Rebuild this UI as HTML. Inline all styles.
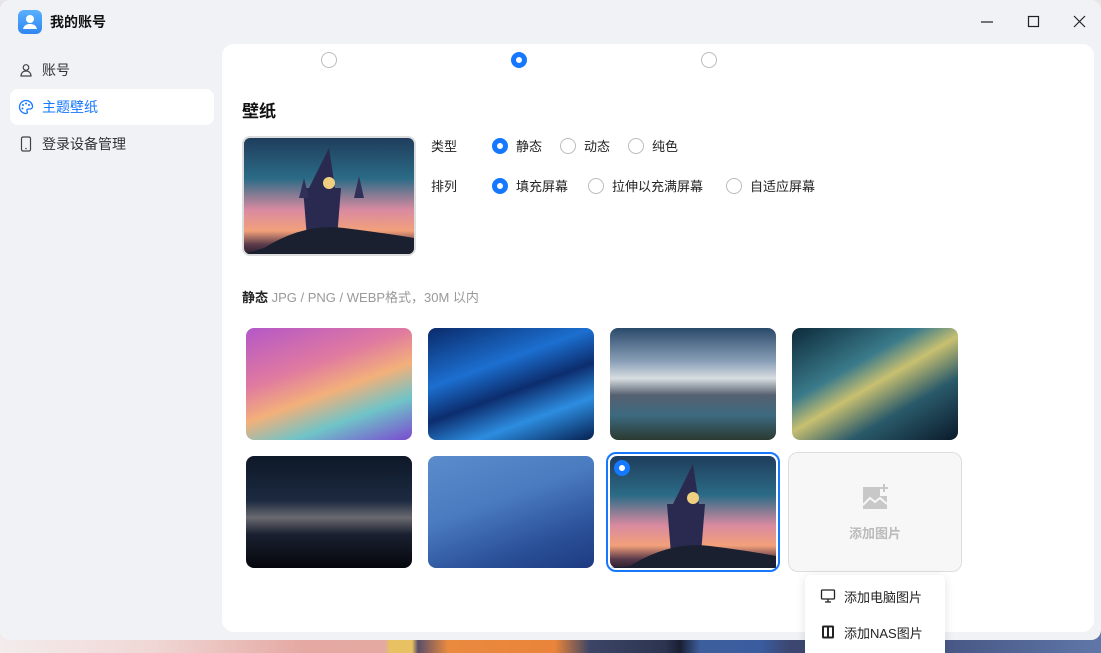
<!DOCTYPE html>
<html><head><meta charset="utf-8"><style>
*{margin:0;padding:0;box-sizing:border-box}
html{width:1101px;height:653px;overflow:hidden}
body{width:1101px;height:653px;overflow:hidden;position:relative;font-family:"Liberation Sans","Noto Sans CJK SC",sans-serif;background:#e9e4e6}
.desk{position:absolute;left:0;top:630px;width:1101px;height:23px;background:linear-gradient(90deg,#f3ecec 0,#f0d8d6 150px,#e5a9a3 300px,#e4a9a0 385px,#e8c262 390px,#e8c262 412px,#5a4e6a 418px,#e98a3f 448px,#e9843a 555px,#3c4566 590px,#2c3450 665px,#1a1f33 680px,#3d5e9c 700px,#3a5da0 760px,#3c4670 790px,#4a5a88 960px,#5f77a8 1101px)}
.win{position:absolute;left:0;top:0;width:1101px;height:640px;background:#f0f2f5;border-radius:10px}
.title{position:absolute;left:50px;top:12px;font-size:14px;font-weight:bold;color:#111}
.logo{position:absolute;left:18px;top:10px;width:24px;height:24px;border-radius:6px;background:linear-gradient(#5ab0ff,#2f86f0)}
.nav{position:absolute;left:10px;width:204px;height:36px;border-radius:8px;font-size:14px;color:#333;line-height:36px;padding-left:32px}
.nav svg{position:absolute;left:9px;top:11px}
.card{position:absolute;left:222px;top:44px;width:872px;height:588px;background:#fff;border-radius:12px;overflow:hidden}
.r{position:absolute;width:16px;height:16px;border-radius:50%;border:1px solid #bbb;background:#fff}
.r.on{border:5px solid #1677ff}
.lbl{position:absolute;font-size:13px;color:#222}
.th{position:absolute;width:166px;height:112px;border-radius:8px;overflow:hidden}
</style></head><body>
<div class="desk"></div>
<div class="win">
<div class="logo"><svg width="24" height="24"><circle cx="12" cy="9" r="4" fill="#fff"/><path d="M5 19c1-4 4-5 7-5s6 1 7 5z" fill="#fff"/></svg></div>
<div class="title">我的账号</div>
<svg style="position:absolute;left:980px;top:15px" width="14" height="14"><path d="M1 7h12" stroke="#222" stroke-width="1.2"/></svg>
<svg style="position:absolute;left:1027px;top:15px" width="14" height="14"><rect x="1.5" y="1.5" width="10" height="10" fill="none" stroke="#222" stroke-width="1.2"/></svg>
<svg style="position:absolute;left:1073px;top:15px" width="14" height="14"><path d="M1 1l11 11M12 1L1 12" stroke="#222" stroke-width="1.2"/></svg>
<div class="nav" style="top:52px"><svg width="14" height="14"><circle cx="7" cy="4.5" r="2.8" fill="none" stroke="#444" stroke-width="1.2"/><path d="M2 13c0-3 2-5 5-5s5 2 5 5z" fill="none" stroke="#444" stroke-width="1.2"/></svg>账号</div>
<div class="nav" style="top:89px;background:#fff;color:#1677ff"><svg width="16" height="16" style="top:10px;left:8px"><path d="M8 1.5a6.5 6.5 0 1 0 0 13c1.5 0 1.5-1.5 1-2.5s0-2 1.5-2h2A2.5 2.5 0 0 0 14.5 7 6.5 6.5 0 0 0 8 1.5z" fill="none" stroke="#1677ff" stroke-width="1.3"/><circle cx="5" cy="6" r="1" fill="#1677ff"/><circle cx="8" cy="4.5" r="1" fill="#1677ff"/><circle cx="11" cy="6" r="1" fill="#1677ff"/><circle cx="4.5" cy="9.5" r="1" fill="#1677ff"/></svg>主题壁纸</div>
<div class="nav" style="top:126px"><svg width="14" height="16" style="top:10px"><rect x="2.5" y="1" width="9" height="14" rx="1.5" fill="none" stroke="#444" stroke-width="1.2"/><circle cx="7" cy="12.5" r=".8" fill="#444"/></svg>登录设备管理</div>
</div>
<div class="card">
<div class="r" style="left:99px;top:8px"></div>
<div class="r on" style="left:289px;top:8px"></div>
<div class="r" style="left:479px;top:8px"></div>
<div style="position:absolute;left:20px;top:53px;font-size:17px;font-weight:bold;color:#111">壁纸</div>
<div class="th" style="left:20px;top:92px;width:174px;height:120px;border:2px solid #ddd;background:linear-gradient(180deg,#1f3d5c 0,#2b6b86 35%,#d98aa0 62%,#f2a07a 80%,#5a3a4a 92%,#2a2030 100%)"><svg width="170" height="116"><path d="M85 10l6 40h6l-4 50h-30l-4-50h6z" fill="#2a2a50"/><circle cx="85" cy="45" r="6" fill="#f0d080"/><path d="M55 60l5-20 5 20zM110 60l5-22 5 22z" fill="#303058"/><path d="M20 110q40-25 80-20t70 10v16H0z" fill="#1a2030"/></svg></div>
<div class="lbl" style="left:209px;top:92px">类型</div>
<div class="r on" style="left:270px;top:94px"></div><div class="lbl" style="left:294px;top:92px">静态</div>
<div class="r" style="left:338px;top:94px"></div><div class="lbl" style="left:362px;top:92px">动态</div>
<div class="r" style="left:406px;top:94px"></div><div class="lbl" style="left:430px;top:92px">纯色</div>
<div class="lbl" style="left:209px;top:132px">排列</div>
<div class="r on" style="left:270px;top:134px"></div><div class="lbl" style="left:294px;top:132px">填充屏幕</div>
<div class="r" style="left:366px;top:134px"></div><div class="lbl" style="left:390px;top:132px">拉伸以充满屏幕</div>
<div class="r" style="left:504px;top:134px"></div><div class="lbl" style="left:528px;top:132px">自适应屏幕</div>
<div style="position:absolute;left:20px;top:243px;font-size:13px;color:#999"><b style="color:#222">静态</b> JPG / PNG / WEBP格式，30M 以内</div>
<div class="th" style="left:24px;top:284px;background:linear-gradient(160deg,#b457c8 0,#e07aa0 35%,#f3b07a 55%,#6fc4c8 75%,#7a4ad0 100%)"></div>
<div class="th" style="left:206px;top:284px;background:linear-gradient(160deg,#0a2a6a 0,#1c6fd0 35%,#0c2d6e 55%,#2d8de0 75%,#062050 100%)"></div>
<div class="th" style="left:388px;top:284px;background:linear-gradient(180deg,#2a4a6a 0,#8aa0b8 30%,#d8dde0 45%,#556070 60%,#3d6a80 78%,#2a3a30 100%)"></div>
<div class="th" style="left:570px;top:284px;background:linear-gradient(150deg,#0c2a3a 0,#3a7a8a 35%,#c8c070 50%,#2a5a6a 70%,#0a1a2a 100%)"></div>
<div class="th" style="left:24px;top:412px;background:linear-gradient(180deg,#0e1828 0,#1c2a40 40%,#6a6a70 55%,#1a2030 70%,#05070c 100%)"></div>
<div class="th" style="left:206px;top:412px;background:linear-gradient(160deg,#5b8ccc 0,#4a7bc0 40%,#2a5098 75%,#1e3a80 100%)"></div>
<div class="th" style="left:384px;top:408px;width:174px;height:120px;border:2px solid #1677ff;border-radius:10px;padding:2px;background:#fff"><div style="width:166px;height:112px;border-radius:7px;background:linear-gradient(180deg,#1f3d5c 0,#2b6b86 35%,#d98aa0 62%,#f2a07a 80%,#5a3a4a 92%,#2a2030 100%);position:relative"><svg width="166" height="112" style="position:absolute;left:0;top:0"><path d="M83 8l6 40h6l-4 50h-30l-4-50h6z" fill="#2a2a50"/><circle cx="83" cy="42" r="6" fill="#f0d080"/><path d="M20 110q40-25 80-20t66 10v12H0z" fill="#1a2030"/></svg><div style="position:absolute;left:4px;top:4px;width:16px;height:16px;border-radius:50%;border:5px solid #1677ff;background:#fff"></div></div></div>
<div class="th" style="left:566px;top:408px;width:174px;height:120px;border:1px solid #ddd;border-radius:10px;background:#f7f7f7"><svg width="30" height="30" style="position:absolute;left:71px;top:30px"><path d="M3 4h17v9h7v13H3z" fill="#c8c8c8"/><path d="M3 22l7-7 5 4 5-4 7 6" fill="none" stroke="#f7f7f7" stroke-width="2"/><path d="M24 1v8M20 5h8" stroke="#c8c8c8" stroke-width="2"/></svg><div style="position:absolute;left:0;width:172px;top:70px;text-align:center;font-size:13px;font-weight:bold;color:#bbb">添加图片</div></div>
</div>
<div style="position:absolute;left:805px;top:575px;width:140px;height:78px;background:#fff;border-radius:6px 6px 0 0;box-shadow:0 2px 10px rgba(0,0,0,.12)">
<svg width="16" height="16" style="position:absolute;left:15px;top:13px"><rect x="1.5" y="2" width="13" height="9" rx="1" fill="none" stroke="#222" stroke-width="1.3"/><path d="M8 11v3M5 14h6" stroke="#222" stroke-width="1.3"/></svg>
<div class="lbl" style="left:39px;top:12px">添加电脑图片</div>
<svg width="16" height="16" style="position:absolute;left:15px;top:49px"><rect x="2" y="1.5" width="12" height="13" rx="1.5" fill="#222"/><rect x="4" y="3.5" width="3" height="9" fill="#fff"/><rect x="9" y="3.5" width="3" height="9" fill="#fff"/></svg>
<div class="lbl" style="left:39px;top:48px">添加NAS图片</div>
</div>
</body></html>
